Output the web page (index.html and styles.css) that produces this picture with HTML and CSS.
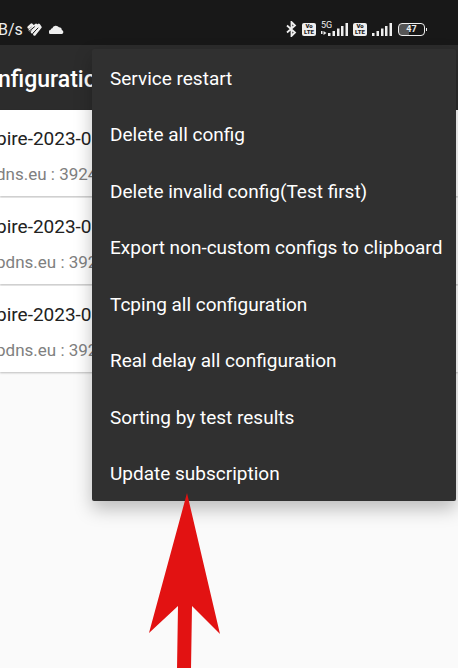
FILE: index.html
```
<!DOCTYPE html>
<html lang="en">
<head>
  <meta charset="UTF-8">
  <meta name="viewport" content="width=device-width, initial-scale=1.0">
  <title>Configuration file</title>
  <link rel="stylesheet" href="styles.css">
</head>
<body>
  <div class="status-bar">
    <div class="status-left">
      <span class="speed">B/s</span>
      <svg class="heart" width="15" height="13" viewBox="0 0 15 13" fill="none" stroke="#eee" stroke-width="2.800" stroke-linecap="round" stroke-linejoin="round">
        <path d="M1.800 4.200L4.500 1.800L5.800 3M3 7L9 2M5.200 9.300L11.800 2L13.300 4.200L7.500 11.300"/>
        <path d="M2 8.300L7.500 3.800M5.800 10.300L11 5" stroke="#181818" stroke-width="1"/>
      </svg>
      <svg class="cloud" width="15" height="9" viewBox="0 0 15 9" fill="#eee">
        <path d="M2 9A2 2 0 0 1 1.500 5 2.200 2.200 0 0 1 3.300 3.200 3.800 3.800 0 0 1 10 2.300 2.800 2.800 0 0 1 12.800 5 2.100 2.100 0 0 1 13 9z"/>
      </svg>
    </div>
    <div class="status-right">
      <svg width="11" height="16" viewBox="0 0 11 16" fill="none" stroke="#eee" stroke-width="1.800">
        <path d="M1 4.500L9 11.500L5.500 15V1L9 4.500L1 11.500"/>
      </svg>
      <span class="volte"><span>Vo</span><span>LTE</span></span>
      <span class="signal">
        <span class="network">5G</span>
        <svg width="27" height="16" viewBox="0 0 27 16" fill="#eee">
          <path d="M0 10h1.500v3H0zM2.500 10l3 2-3 2zM7 12h2.500v3H7zM11.500 10H14v5h-2.500zM16 7.500h2.500V15H16zM20 5h2.500v10H20zM24.500 2H27v13h-2.500z"/>
        </svg>
      </span>
      <span class="volte"><span>Vo</span><span>LTE</span></span>
      <svg width="20" height="16" viewBox="0 0 20 16" fill="#eee">
        <path d="M0 12h2.500v3H0zM4.500 10H7v5H4.500zM9 7.500h2.500V15H9zM13 5h2.500v10H13zM17.500 2H20v13h-2.500z"/>
      </svg>
      <span class="battery"><span>47</span></span>
    </div>
  </div>

  <header class="toolbar">
    <h1>nfiguration</h1>
  </header>

  <main class="configs">
    <div class="config">
      <h2>pire-2023-0</h2>
      <p>dns.eu : 3924</p>
    </div>
    <div class="config">
      <h2>pire-2023-0</h2>
      <p>pdns.eu : 392</p>
    </div>
    <div class="config">
      <h2>pire-2023-0</h2>
      <p>pdns.eu : 392</p>
    </div>
  </main>

  <div class="menu">
    <button>Service restart</button>
    <button>Delete all config</button>
    <button>Delete invalid config(Test first)</button>
    <button>Export non-custom configs to clipboard</button>
    <button>Tcping all configuration</button>
    <button>Real delay all configuration</button>
    <button>Sorting by test results</button>
    <button>Update subscription</button>
  </div>

  <svg class="arrow" width="72" height="176" viewBox="0 0 72 176" fill="#e21212">
    <path d="M38 0L71 141L43 113L42 176H28L29 113L0 140Z"/>
  </svg>
</body>
</html>
```

FILE: styles.css
```
* {
  box-sizing: border-box;
}
body {
  margin: 0;
  min-height: 100vh;
  position: relative;
  overflow-x: hidden;
  background-color: #fafafa;
  font-family: Roboto, sans-serif;
}
h1, h2, p {
  margin: 0;
  font-weight: normal;
  white-space: nowrap;
}

/* status bar */
.status-bar {
  height: 45px;
  padding: 14px 33px 0 0;
  display: flex;
  justify-content: space-between;
  background-color: #181818;
  color: #eee;
}
.status-left, .status-right {
  height: 30px;
  display: flex;
  align-items: center;
}
.status-right {
  gap: 5px;
}
.speed {
  margin-left: -2px;
  font-size: 16px;
}
.heart {
  margin-left: 4px;
}
.cloud {
  margin-left: 7px;
}
.volte {
  width: 14px;
  height: 13px;
  border-radius: 2px;
  display: flex;
  flex-direction: column;
  align-items: center;
  justify-content: center;
  background-color: #eee;
  color: #181818;
  font-size: 6px;
  line-height: 6px;
  font-weight: 900;
}
.signal {
  position: relative;
  display: flex;
}
.network {
  position: absolute;
  top: 0;
  left: 0;
  font-size: 9px;
  line-height: 9px;
}
.battery {
  position: relative;
  width: 27px;
  height: 13px;
  margin-left: 1px;
  border: 1px solid #eee;
  border-radius: 4px;
  display: flex;
  align-items: center;
  justify-content: center;
  background: linear-gradient(to right, #555 40%, #181818 40%);
  font-size: 9px;
  font-weight: bold;
}
.battery::after {
  content: "";
  position: absolute;
  right: -3px;
  top: 4px;
  width: 1px;
  height: 3px;
  background-color: #eee;
}

/* title */
.toolbar {
  height: 65px;
  padding-top: 3px;
  display: flex;
  align-items: center;
  background-color: #2c2c2c;
  color: #fff;
}
.toolbar h1 {
  margin-left: -2px;
  font-size: 23px;
  font-weight: 500;
}

/* list */
.configs {
  display: flex;
  flex-direction: column;
  gap: 2px;
}
.config {
  height: 86px;
  padding-top: 17px;
  background-color: #fff;
  box-shadow: 0 1px 2px rgba(0, 0, 0, 0.25);
}
.config h2 {
  margin-left: -4px;
  font-size: 19px;
  line-height: 24px;
  color: #222;
}
.config p {
  margin: 12px 0 0 -4px;
  font-size: 17px;
  line-height: 22px;
  color: #808080;
}

/* overflow menu */
.menu {
  position: absolute;
  top: 49px;
  right: 2px;
  width: 364px;
  max-width: 100%;
  min-height: 452px;
  display: grid;
  grid-auto-rows: 1fr;
  border-radius: 2px;
  background-color: #303030;
  box-shadow: 0 8px 18px rgba(0, 0, 0, 0.25);
}
.menu button {
  padding: 2px 18px 0;
  border: none;
  background: none;
  color: #fff;
  font-family: inherit;
  font-size: 19px;
  text-align: left;
  white-space: nowrap;
  cursor: pointer;
}

.arrow {
  position: absolute;
  top: 493px;
  left: 149px;
  pointer-events: none;
}
```
